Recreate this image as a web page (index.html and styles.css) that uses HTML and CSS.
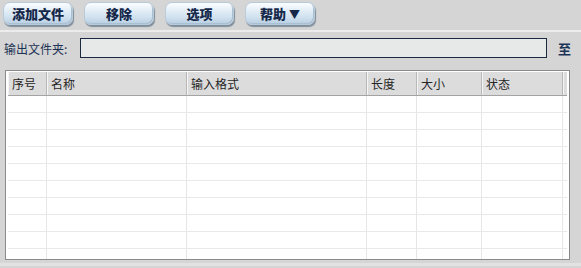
FILE: index.html
```html
<!DOCTYPE html>
<html lang="zh-CN">

<head>
    <meta charset="UTF-8">
    <meta name="viewport" content="width=device-width, initial-scale=1.0">
    <title>格式转换</title>
    <link rel="stylesheet" href="styles.css">
</head>

<body>
    <!-- Barra de botones -->
    <div class="toolbar">
        <button class="btn">添加文件</button>
        <button class="btn">移除</button>
        <button class="btn btn-narrow">选项</button>
        <button class="btn">帮助 <span class="arrow">▼</span></button>
    </div>

    <!-- Carpeta de salida -->
    <div class="folder">
        <label class="folder-label">输出文件夹:</label>
        <input class="folder-input" type="text">
        <span class="to">至</span>
    </div>

    <!-- Lista de archivos -->
    <div class="list">
        <div class="row head">
            <div class="cell c1">序号</div>
            <div class="cell c2">名称</div>
            <div class="cell c3">输入格式</div>
            <div class="cell c4">长度</div>
            <div class="cell c5">大小</div>
            <div class="cell c6">状态</div>
            <div class="cell c7"></div>
        </div>
        <div class="row"><div class="cell c1"></div><div class="cell c2"></div><div class="cell c3"></div><div class="cell c4"></div><div class="cell c5"></div><div class="cell c6"></div><div class="cell c7"></div></div>
        <div class="row"><div class="cell c1"></div><div class="cell c2"></div><div class="cell c3"></div><div class="cell c4"></div><div class="cell c5"></div><div class="cell c6"></div><div class="cell c7"></div></div>
        <div class="row"><div class="cell c1"></div><div class="cell c2"></div><div class="cell c3"></div><div class="cell c4"></div><div class="cell c5"></div><div class="cell c6"></div><div class="cell c7"></div></div>
        <div class="row"><div class="cell c1"></div><div class="cell c2"></div><div class="cell c3"></div><div class="cell c4"></div><div class="cell c5"></div><div class="cell c6"></div><div class="cell c7"></div></div>
        <div class="row"><div class="cell c1"></div><div class="cell c2"></div><div class="cell c3"></div><div class="cell c4"></div><div class="cell c5"></div><div class="cell c6"></div><div class="cell c7"></div></div>
        <div class="row"><div class="cell c1"></div><div class="cell c2"></div><div class="cell c3"></div><div class="cell c4"></div><div class="cell c5"></div><div class="cell c6"></div><div class="cell c7"></div></div>
        <div class="row"><div class="cell c1"></div><div class="cell c2"></div><div class="cell c3"></div><div class="cell c4"></div><div class="cell c5"></div><div class="cell c6"></div><div class="cell c7"></div></div>
        <div class="row"><div class="cell c1"></div><div class="cell c2"></div><div class="cell c3"></div><div class="cell c4"></div><div class="cell c5"></div><div class="cell c6"></div><div class="cell c7"></div></div>
        <div class="row"><div class="cell c1"></div><div class="cell c2"></div><div class="cell c3"></div><div class="cell c4"></div><div class="cell c5"></div><div class="cell c6"></div><div class="cell c7"></div></div>
        <div class="row"><div class="cell c1"></div><div class="cell c2"></div><div class="cell c3"></div><div class="cell c4"></div><div class="cell c5"></div><div class="cell c6"></div><div class="cell c7"></div></div>
    </div>

    <div class="status"></div>
</body>

</html>
```

FILE: styles.css
```css
body {
    margin: 0;
    width: 581px;
    height: 268px;
    overflow: hidden;
    background-color: #d5d5d5;
    font-family: "Noto Sans CJK SC", sans-serif;
    font-size: 12px;
    color: #222222;
}

/* Barra de botones */
.toolbar {
    display: flex;
    gap: 11px;
    height: 32px;
    padding: 2px 0 0 3px;
    box-sizing: border-box;
    border-bottom: 2px solid #ececec;
}

.btn {
    width: 70px;
    height: 23px;
    padding: 0;
    border: 1px solid #b9cad8;
    border-radius: 7px;
    background: linear-gradient(#fbfdff, #e3eef7 35%, #cfe0ee 70%, #b8cfe3);
    box-shadow: 1px 2px 1px #7f8e9c, inset -1px -1px 0 #a9bfd2;
    font-family: "Noto Sans CJK SC", sans-serif;
    font-size: 13px;
    font-weight: 900;
    color: #15284a;
    cursor: pointer;
}

.btn-narrow {
    width: 69px;
}

.arrow {
    font-size: 11px;
}

/* Carpeta de salida */
.folder {
    display: flex;
    align-items: center;
    height: 20px;
    margin-top: 6px;
    padding-left: 4px;
}

.folder-label {
    width: 76px;
    color: #1d3354;
    font-size: 12px;
}

.folder-input {
    width: 467px;
    height: 20px;
    box-sizing: border-box;
    margin: 0;
    border: 1px solid #1b2a3e;
    background: #e6e9e7;
}

.to {
    margin-left: 11px;
    font-size: 13px;
    font-weight: bold;
    color: #1c3458;
}

/* Lista */
.list {
    width: 565px;
    height: 190px;
    box-sizing: border-box;
    margin: 12px 0 0 5px;
    padding: 1px 2px 0 2px;
    border: 1px solid #8a8a8a;
    background: #ffffff;
    overflow: hidden;
}

.row {
    display: flex;
    height: 17px;
    border-bottom: 1px solid #e9e9e9;
    box-sizing: border-box;
}

.row.head {
    height: 24px;
    background: #dcdcdc;
    border-bottom: 1px solid #a3a3a3;
}

.cell {
    border-right: 1px solid #e6e6e6;
    box-sizing: border-box;
}

.head .cell {
    display: flex;
    align-items: center;
    padding-left: 4px;
    border-right: 1px solid #b8b8b8;
    box-shadow: inset 1px 0 0 #f4f4f4;
    color: #262626;
}

.c1 { width: 39px; }
.c2 { width: 140px; }
.c3 { width: 180px; }
.c4 { width: 50px; }
.c5 { width: 65px; }
.c6 { width: 81px; }
.c7 { flex: 1; border-right: none; }

.head .c7 {
    border-right: none;
}

.status {
    height: 3px;
    margin-top: 3px;
    background: #e2e2e2;
}
```
